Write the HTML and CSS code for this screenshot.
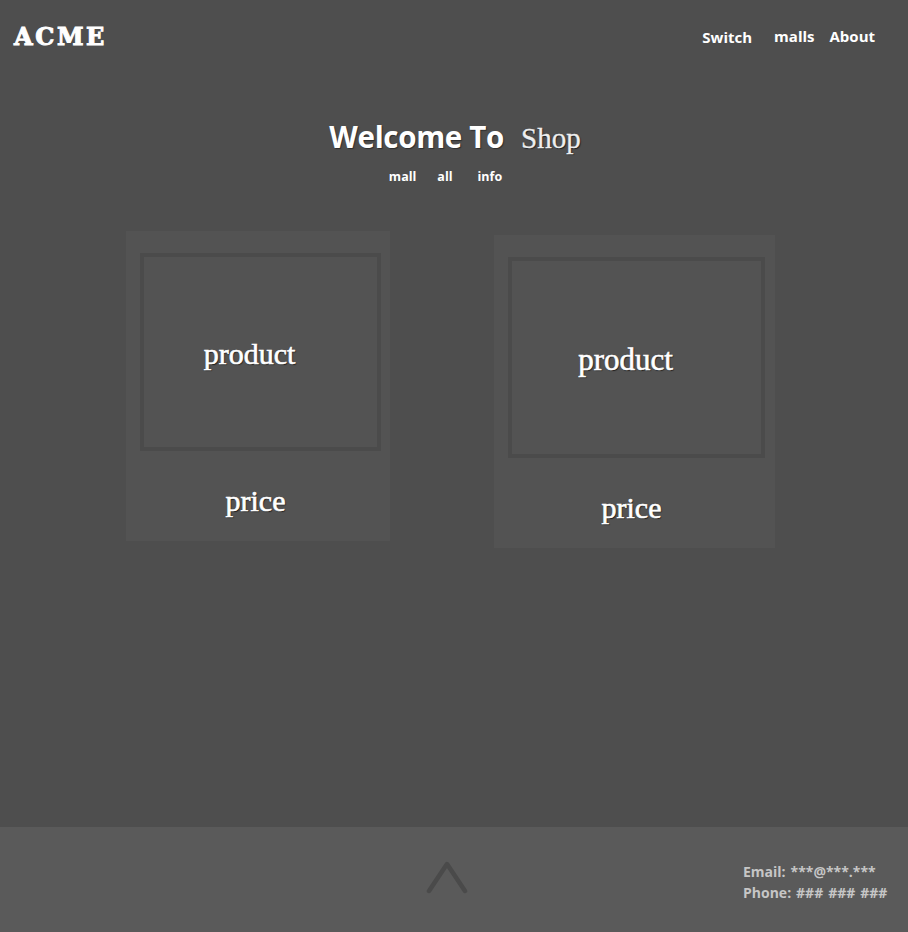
FILE: index.html
```html
<!DOCTYPE html>
<html>
<head>
<meta charset="utf-8">
<link rel="stylesheet" href="styles.css">
</head>
<body>
<div class="page">
  <header class="topbar">
    <div class="logo">ACME</div>
    <nav class="mainnav">
      <a class="nav-switch">Switch</a>
      <a class="nav-malls">malls</a>
      <a class="nav-about">About</a>
    </nav>
  </header>

  <section class="hero">
    <h1 class="title"><span class="welcome">Welcome To</span><span class="shop">Shop</span></h1>
    <nav class="subnav">
      <a>mall</a>
      <a>all</a>
      <a>info</a>
    </nav>
  </section>

  <section class="products">
    <div class="card card-a">
      <div class="thumb"><span class="label">product</span></div>
      <div class="price">price</div>
    </div>
    <div class="card card-b">
      <div class="thumb"><span class="label">product</span></div>
      <div class="price">price</div>
    </div>
  </section>
</div>

<footer class="footer">
  <div class="footer-spacer"></div>
  <div class="up">
    <svg width="44" height="34" viewBox="0 0 44 34"><path d="M4 31 L22 4 L40 31" fill="none" stroke="#4a4a4a" stroke-width="4.5" stroke-linecap="round" stroke-linejoin="round"/></svg>
  </div>
  <div class="contact">
    <div><b>Email:</b> ***@***.***</div>
    <div><b>Phone:</b> ### ### ###</div>
  </div>
</footer>
</body>
</html>
```

FILE: styles.css
```css
html, body {
  margin: 0;
  padding: 0;
}
body {
  background: #4e4e4e;
  color: #ffffff;
  font-family: "Open Sans", "Noto Sans", sans-serif;
}
a {
  color: #ffffff;
  text-decoration: none;
}
.page {
  height: 827px;
}
.topbar {
  display: flex;
  justify-content: space-between;
  align-items: flex-start;
  padding: 22px 33px 0 14px;
}
.logo {
  font-family: "DejaVu Serif", serif;
  font-weight: 900;
  font-size: 24px;
  letter-spacing: 2.6px;
  line-height: 28px;
  color: #ffffff;
  -webkit-text-stroke: 1px #ffffff;
  padding-top: 1px;
}
.mainnav {
  display: flex;
  font-weight: 700;
  font-size: 15px;
  padding-top: 4px;
}
.nav-switch { margin-right: 22px; margin-top: 1px; }
.nav-malls { margin-right: 15px; }

.hero {
  text-align: center;
  padding-top: 66px;
}
.title {
  margin: 0;
  font-weight: normal;
  line-height: 40px;
  display: flex;
  justify-content: center;
  align-items: baseline;
  padding-left: 2px;
}
.welcome {
  font-family: "Open Sans", sans-serif;
  font-weight: 700;
  font-size: 29.5px;
  letter-spacing: -0.3px;
  text-shadow: 1px 1px 1px #2e2e2e;
}
.shop {
  font-family: "Liberation Serif", serif;
  font-size: 29px;
  margin-left: 17px;
  color: #eeeeee;
  text-shadow: 1px 1px 1px #1e1e1e;
  -webkit-text-stroke: 0.3px #eeeeee;
}
.subnav {
  display: flex;
  justify-content: center;
  gap: 21px;
  font-size: 12.5px;
  font-weight: 700;
  margin-top: 10px;
  padding-right: 17px;
}
.subnav a:last-child { margin-left: 4px; }

.products {
  display: flex;
  align-items: flex-start;
  padding-left: 126px;
  gap: 104px;
  margin-top: 46px;
}
.card {
  background: #535353;
  padding: 22px 9px 0 14px;
  box-sizing: border-box;
  display: flex;
  flex-direction: column;
}
.card-a { width: 264px; height: 310px; }
.card-b { width: 281px; height: 313px; margin-top: 4px; padding-right: 10px; }
.thumb {
  border: 4px solid #4b4b4b;
  background: #535353;
  display: flex;
  align-items: center;
  justify-content: center;
  box-sizing: border-box;
  padding-right: 22px;
  padding-top: 4px;
}
.card-a .thumb { height: 198px; }
.card-b .thumb { height: 201px; }
.label, .price {
  font-family: "Liberation Serif", serif;
  font-size: 30px;
  color: #ffffff;
  text-shadow: 1px 1px 1px #1e1e1e;
  -webkit-text-stroke: 0.6px #ffffff;
}
.card-b .label { font-size: 31px; }
.price {
  flex: 1;
  display: flex;
  align-items: center;
  justify-content: center;
  padding-right: 10px;
  padding-top: 10px;
}

.footer {
  background: #5a5a5a;
  height: 105px;
  display: flex;
  align-items: flex-start;
  box-sizing: border-box;
}
.footer-spacer { width: 425px; }
.up {
  padding-top: 33px;
}
.up svg { display: block; }
.contact {
  margin-left: auto;
  width: 165px;
  padding-top: 34px;
  font-size: 14px;
  font-weight: 700;
  line-height: 21px;
  color: #c6c6c6;
  white-space: nowrap;
  word-spacing: 1.3px;
}
.contact b { font-weight: 700; }
```
